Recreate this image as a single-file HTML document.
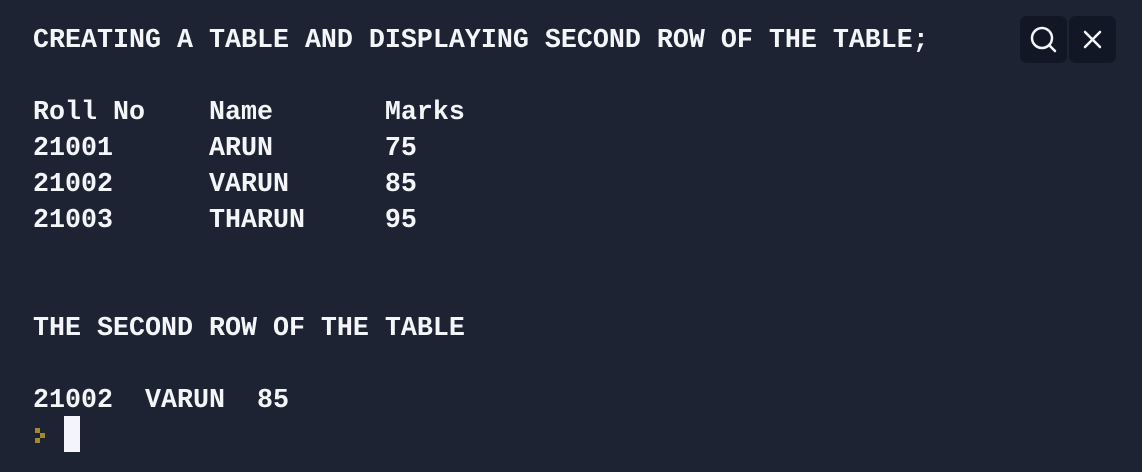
<!DOCTYPE html>
<html><head><style>
html,body{margin:0;padding:0;background:#1e2333;width:1142px;height:472px;overflow:hidden}
pre{position:absolute;left:33px;top:23px;margin:0;font-family:"Liberation Mono",monospace;font-weight:bold;font-size:26.67px;line-height:36px;color:#f3f5f8}
.btn{position:absolute;top:16px;width:47px;height:47px;background:#121726;border-radius:7px}
.cur{position:absolute;left:64px;top:416px;width:16px;height:36px;background:#f3f5f8}
.p{position:absolute;width:5px;height:5px;background:#a08a2a}
</style></head><body>
<pre>CREATING A TABLE AND DISPLAYING SECOND ROW OF THE TABLE;

Roll No    Name       Marks
21001      ARUN       75
21002      VARUN      85
21003      THARUN     95


THE SECOND ROW OF THE TABLE

21002  VARUN  85</pre>
<div class="btn" style="left:1020px"><svg width="47" height="47"><circle cx="22" cy="22" r="10" fill="none" stroke="#f3f5f8" stroke-width="2.5"/><line x1="29" y1="29" x2="35" y2="35" stroke="#f3f5f8" stroke-width="2.5" stroke-linecap="round"/></svg></div>
<div class="btn" style="left:1069px"><svg width="47" height="47"><path d="M16 16L31 31M31 16L16 31" stroke="#f3f5f8" stroke-width="2.5" stroke-linecap="round"/></svg></div>
<div class="p" style="left:35px;top:428px"></div>
<div class="p" style="left:40px;top:433px"></div>
<div class="p" style="left:35px;top:438px"></div>
<div class="cur"></div>
</body></html>
